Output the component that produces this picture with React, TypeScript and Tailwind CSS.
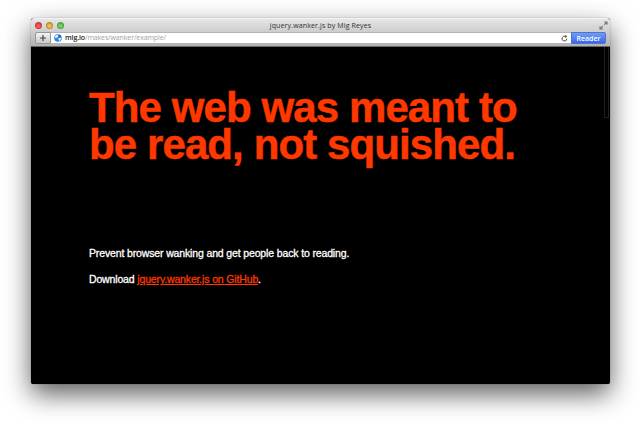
function TrafficLight({ color }: { color: string }) {
  return (
    <span
      className={`h-[7px] w-[7px] rounded-full border border-black/25 shadow-[inset_0_1px_1px_rgba(0,0,0,0.2)] ${color}`}
    />
  );
}

function TitleBar() {
  return (
    <div className="grid h-[13px] shrink-0 grid-cols-[1fr_auto_1fr] items-center">
      <div className="flex gap-[4px] pb-px pl-[4px]">
        <TrafficLight color="bg-[#fb5652]" />
        <TrafficLight color="bg-[#fbb945]" />
        <TrafficLight color="bg-[#6fd45c]" />
      </div>
      <h1 className="font-['Open_Sans',sans-serif] text-[7px] leading-[11px] tracking-[0.13px] whitespace-nowrap text-[#303030]">
        jquery.wanker.js by Mig Reyes
      </h1>
      <svg className="mr-[2px] justify-self-end" width="9" height="9" viewBox="0 0 9 9" fill="none" stroke="#777" strokeWidth="1.1">
        <path d="M5.2 1H8v2.8M8 1 5.1 3.9M3.8 8H1V5.2M1 8l2.9-2.9" />
      </svg>
    </div>
  );
}

function AddressBar() {
  return (
    <div className="flex h-[12px] shrink-0 items-stretch pr-[4px] pl-[4px]">
      <div className="flex w-[16px] items-center justify-center rounded-l-[2px] border border-[#989898] bg-linear-to-b from-[#f4f4f4] to-[#c9c9c9]">
        <svg width="6" height="6" viewBox="0 0 6 6" stroke="#444" strokeWidth="1.2">
          <path d="M3 0v6M0 3h6" />
        </svg>
      </div>
      <div className="flex flex-1 items-center border-y border-[#b4b4b4] bg-white pl-[3px]">
        <svg width="8" height="8" viewBox="0 0 8 8">
          <circle cx="4" cy="4" r="3.8" fill="#3484db" />
          <path d="M1 2.3 2.6 1l2 .5-.8 1.6L2.3 4 1 3.5ZM4.6 4.1l2-.3.6 1L5.4 7l-.9-1.2Z" fill="#e4f1fc" />
          <path d="M4.5.8 6.8 1.9 7 3 5 2.8Z" fill="#114cb5" />
        </svg>
        <p className="ml-[3px] flex-1 font-['Open_Sans',sans-serif] text-[7px] leading-[10px] tracking-[-0.12px] text-[#a2a2a2]">
          <span className="font-semibold text-[#222]">mig.io</span>/makes/wanker/example/
        </p>
        <svg className="mr-[3px]" width="7" height="7" viewBox="0 0 7 7" fill="none" stroke="#555" strokeWidth="1">
          <path d="M5.8 3.7A2.4 2.4 0 1 1 4.7 1.6" />
          <path d="M4 0 6.4 1.2 4.2 3Z" fill="#555" stroke="none" />
        </svg>
      </div>
      <div className="flex w-[35px] items-center justify-center rounded-r-[2px] border border-[#4e72cf] bg-linear-to-b from-[#739cf2] to-[#3868eb] font-['Open_Sans',sans-serif] text-[7px] leading-none font-semibold text-white">
        Reader
      </div>
    </div>
  );
}

export default function App() {
  return (
    <div className="h-[426px] w-[640px] overflow-hidden bg-white pt-[18px] pl-[31px]">
      <div className="flex h-[366px] w-[579px] flex-col overflow-hidden rounded-t-[3px] rounded-b-[2px] bg-black shadow-[0_0_1px_rgba(0,0,0,0.6),0_10px_26px_rgba(0,0,0,0.64)]">
        <header className="flex h-[29px] shrink-0 flex-col border-t border-b border-t-[#f4f4f4] border-b-[#666] bg-linear-to-b from-[#e6e6e6] to-[#b2b2b2]">
          <TitleBar />
          <AddressBar />
        </header>
        <div className="flex flex-1 justify-between">
          <main className="pt-[42px] pl-[58px] font-['Liberation_Sans',Arial,sans-serif] whitespace-nowrap">
            <h2 className="text-[42px] leading-[37px] font-bold tracking-[-0.9px] text-[#ff3800] [-webkit-text-stroke:0.5px_#ff3800]">
              The web was meant to
              <br />
              be read, not squished.
            </h2>
            <p className="mt-[83px] text-[10.5px] leading-[14px] tracking-[-0.14px] text-white [-webkit-text-stroke:0.3px_white]">
              Prevent browser wanking and get people back to reading.
            </p>
            <p className="mt-[12px] text-[10.5px] leading-[14px] tracking-[-0.15px] text-white [-webkit-text-stroke:0.3px_white]">
              Download{" "}
              <a className="text-[#ff3800] underline decoration-1 underline-offset-1 [-webkit-text-stroke:0.3px_#ff3800]">
                jquery.wanker.js on GitHub
              </a>
              .
            </p>
          </main>
          <div className="mr-px h-[71px] w-[5px] border border-t-0 border-[#202020]" />
        </div>
      </div>
    </div>
  );
}
